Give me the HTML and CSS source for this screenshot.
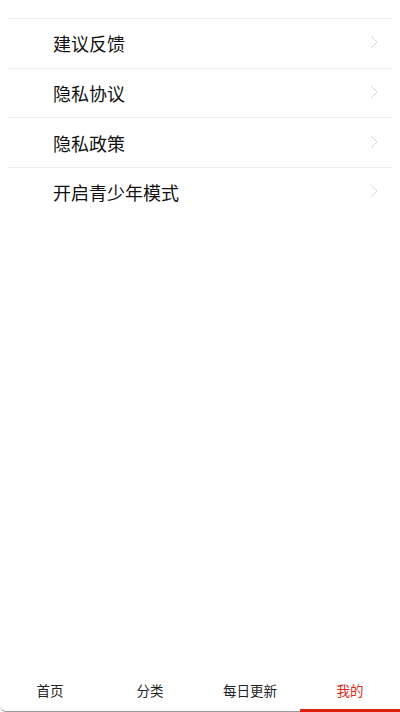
FILE: index.html
```html
<!DOCTYPE html>
<html lang="zh">
<head>
<meta charset="utf-8">
<link rel="stylesheet" href="styles.css">
</head>
<body>
<div class="page">
  <div class="list">
    <div class="row"><span class="label">建议反馈</span><svg class="chev" viewBox="0 0 8 14" width="8" height="14"><path d="M1 1 L7 7 L1 13" fill="none" stroke="#d8d8d8" stroke-width="1"/></svg></div>
    <div class="row"><span class="label">隐私协议</span><svg class="chev" viewBox="0 0 8 14" width="8" height="14"><path d="M1 1 L7 7 L1 13" fill="none" stroke="#d8d8d8" stroke-width="1"/></svg></div>
    <div class="row"><span class="label">隐私政策</span><svg class="chev" viewBox="0 0 8 14" width="8" height="14"><path d="M1 1 L7 7 L1 13" fill="none" stroke="#d8d8d8" stroke-width="1"/></svg></div>
    <div class="row"><span class="label">开启青少年模式</span><svg class="chev" viewBox="0 0 8 14" width="8" height="14"><path d="M1 1 L7 7 L1 13" fill="none" stroke="#d8d8d8" stroke-width="1"/></svg></div>
  </div>
  <nav class="tabbar">
    <div class="tab">首页</div>
    <div class="tab">分类</div>
    <div class="tab">每日更新</div>
    <div class="tab active">我的</div>
  </nav>
</div>
</body>
</html>
```

FILE: styles.css
```css
html, body {
  margin: 0;
  padding: 0;
  background: #fff;
}
body {
  font-family: "Noto Sans CJK SC", "Noto Sans", sans-serif;
  color: #111;
}
.page {
  width: 400px;
  height: 712px;
  display: flex;
  flex-direction: column;
  overflow: hidden;
}
.list {
  flex: 1;
  padding: 18px 8px 0 8px;
}
.row {
  height: 48.7px;
  border-top: 1px solid #efefef;
  display: flex;
  align-items: center;
  justify-content: space-between;
  padding: 0 14px 0 45px;
}
.label {
  font-size: 18px;
  line-height: 1;
  color: #111;
}
.chev {
  display: block;
  margin-top: -2px;
}
.tabbar {
  height: 44px;
  display: flex;
  border-bottom: 1px solid #9a9a9a;
  border-bottom-left-radius: 6px;
  box-sizing: border-box;
}
.tab {
  flex: 1;
  display: flex;
  align-items: center;
  justify-content: center;
  font-size: 13.5px;
  color: #222;
}
.tab.active {
  color: #e02a1a;
  border-bottom: 3px solid #e0200f;
  margin-bottom: -1px;
  padding-top: 3px;
}
```
